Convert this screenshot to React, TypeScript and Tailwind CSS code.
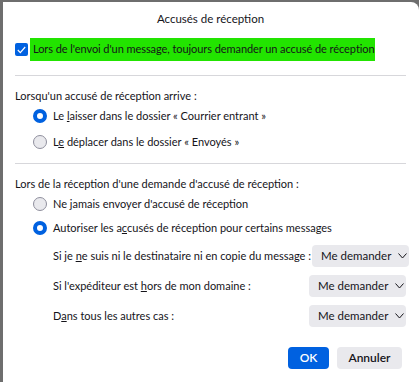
import React from 'react';

// Read receipts dialog (Thunderbird style)

function Radio({ checked }: { checked: boolean }) {
  return checked ? (
    <span className="block h-[14px] w-[14px] shrink-0 rounded-full border-[4px] border-[#0061e0] bg-white" />
  ) : (
    <span className="block h-[14px] w-[14px] shrink-0 rounded-full border border-[#8f8f9d] bg-[#e9e9ed]" />
  );
}

function Chevron() {
  return (
    <svg width="9" height="6" viewBox="0 0 9 6" fill="none" stroke="currentColor" strokeWidth="1" className="ml-[7px]">
      <polyline points="0.5,0.5 4.5,5 8.5,0.5" />
    </svg>
  );
}

function Dropdown() {
  return (
    <div className="flex h-[22px] w-[97px] shrink-0 items-center whitespace-nowrap rounded-[4px] bg-[#e9e9ed] pl-[9px] text-[11.5px] text-[#15141a]">
      Me demander
      <Chevron />
    </div>
  );
}

function RadioRow({ checked, children, className }: { checked: boolean; children: React.ReactNode; className?: string }) {
  return (
    <div className={'flex h-[20px] items-center pl-[18px] ' + (className ?? '')}>
      <Radio checked={checked} />
      <span className="ml-[6px]">{children}</span>
    </div>
  );
}

function SubRow({ children, className }: { children: React.ReactNode; className?: string }) {
  return (
    <div className={'flex h-[22px] items-center justify-between pl-[38px] ' + (className ?? '')}>
      <span>{children}</span>
      <Dropdown />
    </div>
  );
}

export default function App() {
  return (
    <div className="h-[382px] w-[419px] bg-[#6e6e6e] pl-[3px] pt-[2px]">
      <div
        className="flex h-full flex-col whitespace-nowrap rounded-tr-[8px] bg-white pl-[12px] pr-[13px] text-[11px] text-[#15141a]"
        style={{ fontFamily: 'Lato, sans-serif' }}
      >
        <div className="flex h-[34px] items-center justify-center text-[11.5px]">Accusés de réception</div>

        <div className="mt-[2px] flex h-[23px] items-center">
          <span className="flex h-[13px] w-[13px] items-center justify-center rounded-[2px] bg-[#0061e0]">
            <svg width="9" height="8" viewBox="0 0 9 8" fill="none" stroke="white" strokeWidth="1.2">
              <polyline points="0.8,4 3.3,6.6 8.2,1" />
            </svg>
          </span>
          <span className="ml-[2px] flex h-[23px] w-[345px] items-center bg-[#22e400] pl-[3px] tracking-[-0.07px]">
            Lors de l'envoi d'un message, toujours demander un accusé de réception
          </span>
        </div>

        <div className="mt-[14px] border-t border-[#d7d7db]" />

        <div className="mt-[11px] flex h-[19px] items-center">Lorsqu'un accusé de réception arrive :</div>
        <RadioRow checked>
          Le <u>l</u>aisser dans le dossier « Courrier entrant »
        </RadioRow>
        <RadioRow checked={false} className="mt-[6px]">
          L<u>e</u> déplacer dans le dossier « Envoyés »
        </RadioRow>

        <div className="mt-[11px] border-t border-[#d7d7db]" />

        <div className="mt-[10px] flex h-[20px] items-center">
          Lors de la réception d'une demande d'accusé de réception :
        </div>
        <RadioRow checked={false}>
          Ne <u>j</u>amais envoyer d'accusé de réception
        </RadioRow>
        <RadioRow checked className="mt-[4px]">
          Autoriser les a<u>c</u>cusés de réception pour certains messages
        </RadioRow>

        <SubRow className="-mr-[3px] mt-[7px]">
          Si je <u>n</u>e suis ni le destinataire ni en copie du message :
        </SubRow>
        <SubRow className="mt-[8px]">
          Si l'expéditeur est <u>h</u>ors de mon domaine :
        </SubRow>
        <SubRow className="mt-[8px]">
          D<u>a</u>ns tous les autres cas :
        </SubRow>

        <div className="mt-[20px] flex justify-end gap-[8px] pr-[4px] text-[12px]">
          <button className="h-[22px] w-[41px] rounded-[4px] bg-[#0061e0] font-semibold text-white">OK</button>
          <button className="h-[22px] w-[65px] rounded-[4px] bg-[#e9e9ed] font-semibold text-[#15141a]">Annuler</button>
        </div>
      </div>
    </div>
  );
}
